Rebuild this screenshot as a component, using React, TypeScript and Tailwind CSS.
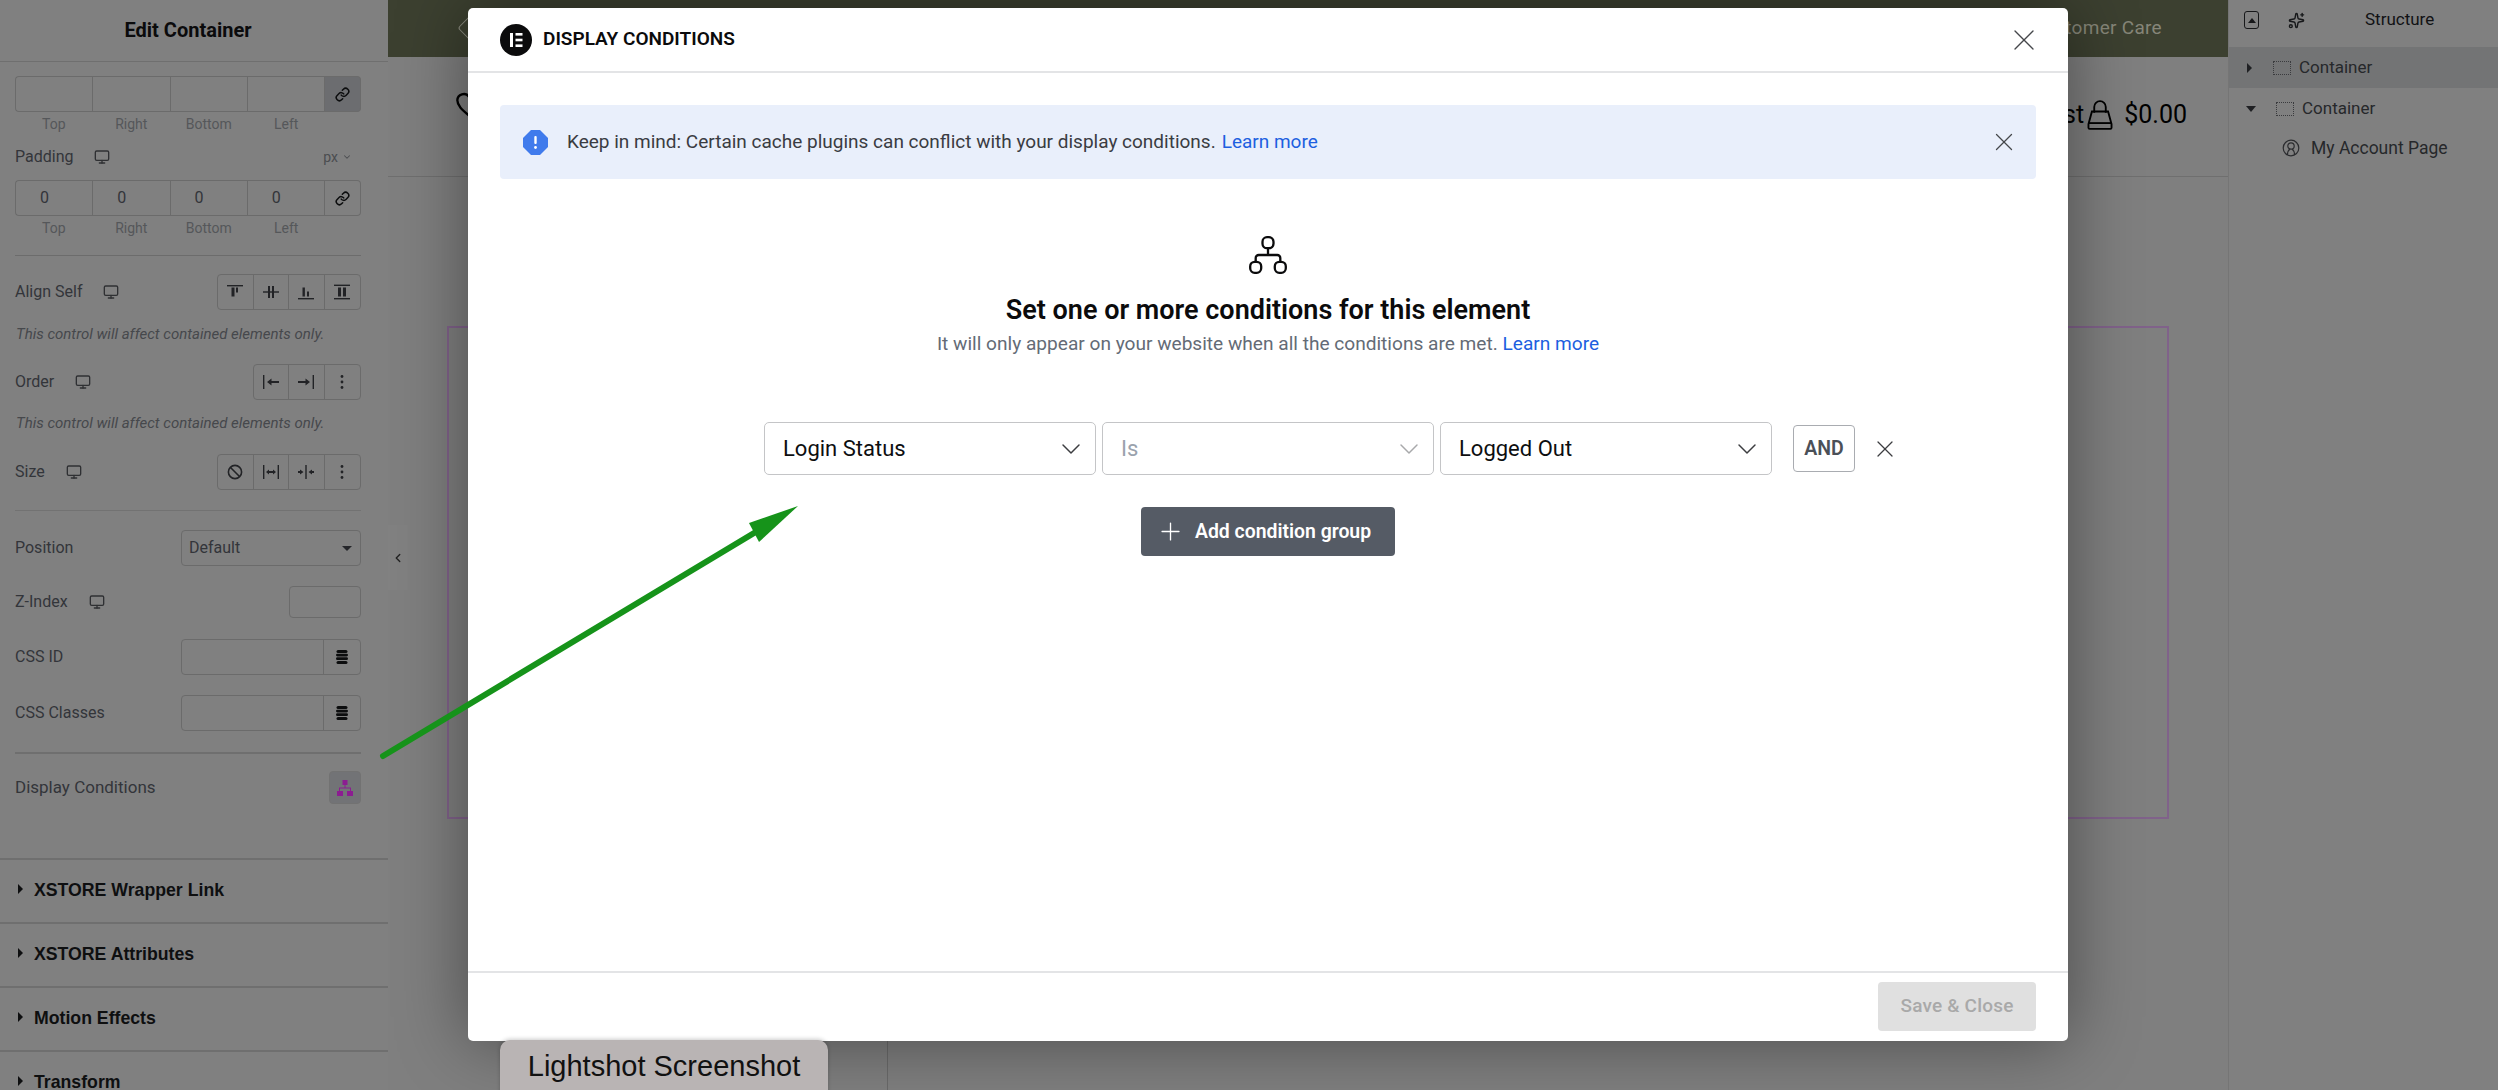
import { ChevronDown, ChevronLeft, Link, Monitor, Plus, Sparkles, X } from "lucide-react";
import type { ReactNode } from "react";

const Device = () => <Monitor size={16} strokeWidth={2} className="text-[#2f3033]" />;

const SideBox = ({ values }: { values: string[] }) => (
  <div className="flex h-9 rounded-l-[4px] border border-r-0 border-[#6b6b6b]">
    {values.map((v, i) => (
      <div key={i} className="flex flex-1 items-center border-r border-[#6b6b6b] pl-6 text-[16px] text-[#33353a]">
        {v}
      </div>
    ))}
  </div>
);

const SideLabels = () => (
  <div className="mt-1 flex h-4 items-center pr-[36px] text-[14px] text-[#55575a]">
    {["Top", "Right", "Bottom", "Left"].map((l) => (
      <div key={l} className="flex-1 text-center">{l}</div>
    ))}
  </div>
);

const BoxRow = ({ linked, values }: { linked?: boolean; values: string[] }) => (
  <div className="flex">
    <div className="flex-1">
      <SideBox values={values} />
    </div>
    <div className={`flex h-9 w-[36px] items-center justify-center rounded-r-[4px] border border-l-0 border-[#6b6b6b] ${linked ? "bg-[#6c6d70]" : ""}`}>
      <Link size={15} strokeWidth={2.4} className="text-[#0c0d0e]" />
    </div>
  </div>
);

const Seg = ({ cells }: { cells: ReactNode[] }) => (
  <div className="flex h-9 rounded-[4px] border border-[#6b6b6b]">
    {cells.map((c, i) => (
      <div key={i} className="flex w-[35.500px] items-center justify-center border-r border-[#6b6b6b] text-[#222326] last:border-r-0">
        {c}
      </div>
    ))}
  </div>
);

const Glyph = ({ children }: { children: ReactNode }) => (
  <svg width="18" height="18" viewBox="0 0 18 18" fill="currentColor">{children}</svg>
);

const alignCells = [
  <Glyph key="a"><rect x="1" y="2" width="16" height="1.4" /><rect x="5.5" y="4.5" width="3" height="9" /><rect x="10" y="4.5" width="2" height="5" /></Glyph>,
  <Glyph key="b"><rect x="1" y="8.3" width="16" height="1.4" /><rect x="6" y="3" width="2" height="12" /><rect x="10" y="3" width="2" height="12" /></Glyph>,
  <Glyph key="c"><rect x="1" y="15" width="16" height="1.4" /><rect x="5.5" y="4.5" width="2.4" height="9" /><rect x="10" y="8.5" width="2" height="5" /></Glyph>,
  <Glyph key="d"><rect x="1" y="1.6" width="16" height="1.4" /><rect x="1" y="15" width="16" height="1.4" /><rect x="5" y="4.5" width="3" height="9" /><rect x="10" y="4.5" width="3" height="9" /></Glyph>,
];

const Dots = () => (
  <Glyph><circle cx="9" cy="3.5" r="1.4" /><circle cx="9" cy="9" r="1.4" /><circle cx="9" cy="14.5" r="1.4" /></Glyph>
);

const orderCells = [
  <Glyph key="a"><rect x="1" y="2" width="1.4" height="14" /><path d="M5 9l4.5-3.5V8H17v2H9.5v2.500z" /></Glyph>,
  <Glyph key="b"><rect x="15.600" y="2" width="1.4" height="14" /><path d="M13 9L8.500 5.500V8H1v2h7.500v2.500z" /></Glyph>,
  <Dots key="c" />,
];

const sizeCells = [
  <svg key="a" width="18" height="18" viewBox="0 0 18 18" fill="none" stroke="currentColor" strokeWidth="1.6"><circle cx="9" cy="9" r="6.600" /><path d="M4.500 4.500l9 9" /></svg>,
  <Glyph key="b"><rect x="1" y="2" width="1.4" height="14" /><rect x="15.600" y="2" width="1.4" height="14" /><path d="M4 9l3-2.500V8h4V6.500L14 9l-3 2.500V10H7v1.500z" /></Glyph>,
  <Glyph key="c"><rect x="8.300" y="2" width="1.4" height="14" /><path d="M1 8h2V6.500L6.500 9 3 11.500V10H1zM17 8h-2V6.500L11.500 9l3.500 2.500V10h2z" /></Glyph>,
  <Dots key="d" />,
];

// the dynamic-tags stack, solid in the reference
const DbIcon = () => (
  <svg width="12" height="14" viewBox="0 0 12 14" fill="#0c0d0e">
    <rect x="0.500" y="0" width="11" height="3" rx="1.500" />
    <rect x="0" y="3.700" width="12" height="2.800" rx="1.400" />
    <rect x="0" y="7.300" width="12" height="2.800" rx="1.400" />
    <rect x="0.500" y="10.900" width="11" height="3" rx="1.500" />
  </svg>
);

const Field = () => (
  <div className="flex h-9 w-[180px] rounded-[4px] border border-[#6b6b6b]">
    <div className="flex-1 border-r border-[#6b6b6b]" />
    <div className="flex w-9 items-center justify-center">
      <DbIcon />
    </div>
  </div>
);

const Labeled = ({ label, device, big, children }: { label: string; device?: boolean; big?: boolean; children: ReactNode }) => (
  <div className="flex items-center justify-between">
    <div className={`flex items-center gap-[21px] text-[#33353a] ${big ? "text-[17px]" : "text-[16px]"}`}>
      <span>{label}</span>
      {device && <Device />}
    </div>
    {children}
  </div>
);

const Note = () => (
  <div className="flex h-4 items-center whitespace-nowrap pl-px text-[15px] italic text-[#46484c]">
    This control will affect contained elements only.
  </div>
);

const Section = ({ title }: { title: string }) => (
  <div className="flex h-[64px] items-start gap-[11px] border-t-2 border-[#6f6f6f] pl-[18px] pt-[21px] font-['Liberation_Sans',sans-serif] text-[17.700px] font-bold text-[#0e0f10]">
    <span className="mt-[3px] h-0 w-0 border-y-[5px] border-l-[5px] border-y-transparent border-l-[#0e0f10]" />
    <span className="leading-[18px]">{title}</span>
  </div>
);

const LeftPanel = () => (
  <aside className="h-full w-[388px] shrink-0 overflow-hidden bg-[#808080]">
    <div className="flex h-[62px] items-center justify-center border-b border-[#6f6f6f] pb-[2px] pr-3 text-[20px] font-bold text-[#0b0b0c]">
      Edit Container
    </div>
    <div className="pl-[15px] pr-[27px]">
      <div className="mt-[14px]"><BoxRow linked values={["", "", "", ""]} /></div>
      <SideLabels />
      <div className="mt-[13px] flex h-6 items-center justify-between pr-[9px]">
        <div className="flex items-center gap-[21px] text-[16px] text-[#33353a]">
          <span>Padding</span>
          <Device />
        </div>
        <div className="flex items-center gap-1 text-[14px] text-[#4b4d50]">
          px <ChevronDown size={10} strokeWidth={2.5} />
        </div>
      </div>
      <div className="mt-[11px]"><BoxRow values={["0", "0", "0", "0"]} /></div>
      <SideLabels />
      <div className="mt-[19px] h-px bg-[#6c6c6c]" />
      <div className="mt-[18px]"><Labeled label="Align Self" device><Seg cells={alignCells} /></Labeled></div>
      <div className="mt-4"><Note /></div>
      <div className="mt-[22px]"><Labeled label="Order" device><Seg cells={orderCells} /></Labeled></div>
      <div className="mt-[15px]"><Note /></div>
      <div className="mt-[23px]"><Labeled label="Size" device><Seg cells={sizeCells} /></Labeled></div>
      <div className="mt-5 h-px bg-[#727272]" />
      <div className="mt-[19px]">
        <Labeled label="Position">
          <div className="flex h-9 w-[180px] items-center justify-between rounded-[4px] border border-[#6b6b6b] pl-[7px] pr-[8px] text-[16px] text-[#33353a]">
            Default
            <span className="h-0 w-0 border-x-[5px] border-t-[5px] border-x-transparent border-t-[#25262a]" />
          </div>
        </Labeled>
      </div>
      <div className="mt-5">
        <Labeled label="Z-Index" device>
          <div className="h-8 w-[72px] rounded-[4px] border border-[#6b6b6b]" />
        </Labeled>
      </div>
      <div className="mt-[21px]"><Labeled label="CSS ID"><Field /></Labeled></div>
      <div className="mt-5"><Labeled label="CSS Classes"><Field /></Labeled></div>
      <div className="mt-[21px] h-[2px] bg-[#6f6f6f]" />
      <div className="mt-[17px]">
        <Labeled label="Display Conditions" big>
          <div className="flex h-[33px] w-[32px] items-center justify-center rounded-[4px] border border-[#727272] bg-[#727376]">
            <svg width="18" height="18" viewBox="0 0 18 18" fill="#8c1d91">
              <rect x="6.500" y="1" width="5" height="5" />
              <rect x="1" y="12" width="6" height="5" />
              <rect x="11" y="12" width="6" height="5" />
              <path d="M8.500 6h1v2.500H15V12h-1V9.500H4V12H3V8.500h5.500z" />
            </svg>
          </div>
        </Labeled>
      </div>
    </div>
    <div className="mt-[54px]">
      <Section title="XSTORE Wrapper Link" />
      <Section title="XSTORE Attributes" />
      <Section title="Motion Effects" />
      <Section title="Transform" />
    </div>
  </aside>
);

const PageBackdrop = () => (
  <main className="relative h-full min-w-0 flex-1 overflow-hidden bg-[#7f7f7f]">
    <div className="flex h-[57px] items-center justify-between bg-[#3c4030] pb-[1px] pl-[74px] pr-[66px] text-[19px] text-[#868679]">
      <span className="h-[22px] w-[22px] rotate-45 rounded-[3px] border border-[#8c8c80]" />
      <span className="tracking-[0.3px]">Customer Care</span>
    </div>
    <div className="flex h-[120px] items-center justify-between border-b border-[#6f6f6f] pb-[3px] pl-[67px] pr-[41px] text-black">
      <svg className="-mt-[20px]" width="28" height="28" viewBox="0 0 24 24" fill="none" stroke="currentColor" strokeWidth="2"><path d="M12 21C6 16 2 12.500 2 8a5.500 5.500 0 0 1 10-3 5.500 5.500 0 0 1 10 3c0 4.500-4 8-10 13z" /></svg>
      <div className="flex items-center text-[25px]">
        <span className="mr-[2px]">Wishlist</span>
        <svg width="28" height="30" viewBox="0 0 24 26" fill="none" stroke="currentColor" strokeWidth="1.600">
          <path d="M7 11V6a5 5 0 0 1 10 0v5" />
          <path d="M5 10h14l3 11v3a1 1 0 0 1-1 1H3a1 1 0 0 1-1-1v-3z" />
          <path d="M2 20h20" />
        </svg>
        <span className="ml-[10px]">$0.00</span>
      </div>
    </div>
    <div className="mx-[59px] mt-[149px] h-[493px] border-2 border-[#80628a]" />
    <div className="ml-[499px] mt-[221px] h-[60px] border-l border-[#6a6a6a]" />
    <div className="absolute left-0 top-[525px] flex h-[65px] w-5 items-center justify-center bg-[#818181] text-[#222]">
      <ChevronLeft size={14} strokeWidth={2.4} />
    </div>
  </main>
);

const StructurePanel = () => (
  <aside className="h-full w-[270px] shrink-0 border-l border-[#757575] bg-[#808080] text-[17px] text-[#26282b]">
    <div className="flex h-[47px] items-center pb-[7px] pl-[15px]">
      <span className="flex h-[18px] w-[15px] items-center justify-center rounded-[3px] border-[1.500px] border-[#17181a]">
        <span className="h-0 w-0 border-x-[4px] border-b-[5px] border-x-transparent border-b-[#17181a]" />
      </span>
      <Sparkles size={17} className="ml-[29px] text-[#17181a]" />
      <span className="ml-[60px] text-[#111214]">Structure</span>
    </div>
    <div className="flex h-[41px] items-center bg-[#737475] pl-[18px]">
      <span className="h-0 w-0 border-y-[5px] border-l-[5px] border-y-transparent border-l-[#1f2023]" />
      <span className="ml-[21px] h-[14px] w-[18px] border border-dotted border-[#3a3b3e]" />
      <span className="ml-[8px]">Container</span>
    </div>
    <div className="flex h-[41px] items-center pl-[17px]">
      <span className="h-0 w-0 border-x-[5px] border-t-[6px] border-x-transparent border-t-[#1f2023]" />
      <span className="ml-[20px] h-[14px] w-[18px] border border-dotted border-[#3a3b3e]" />
      <span className="ml-[8px]">Container</span>
    </div>
    <div className="flex h-[38px] items-center pl-[53px]">
      <svg width="18" height="18" viewBox="0 0 18 18" fill="none" stroke="#2b2c2f" strokeWidth="1.200">
        <circle cx="9" cy="9" r="7.800" />
        <circle cx="9" cy="7" r="3.200" />
        <path d="M5.500 16c0-3 1-5 2.500-6M12.500 16c0-3-1-5-2.500-6" />
      </svg>
      <span className="ml-[11px] text-[17.500px] text-[#26282b]">My Account Page</span>
    </div>
  </aside>
);

const ConditionSelect = ({ value, muted, width }: { value: string; muted?: boolean; width: string }) => (
  <div className={`flex h-[53px] items-center justify-between rounded-[5px] border border-[#c4c5c7] pl-[18px] pr-[8px] text-[22px] ${width} ${muted ? "text-[#9aa2ad]" : "text-[#0d0e10]"}`}>
    {value}
    <ChevronDown size={32} strokeWidth={1.100} className={muted ? "text-[#a8a9ab]" : "text-[#3c3d40]"} />
  </div>
);

const Modal = () => (
  <div className="absolute left-[468px] top-2 flex h-[1033px] w-[1600px] flex-col rounded-[5px] bg-white shadow-[0_0_70px_rgba(0,0,0,0.42)]">
    <div className="flex h-[65px] shrink-0 items-center border-b-2 border-[#e3e4e6] pl-8 pr-[26px]">
      <svg width="32" height="32" viewBox="0 0 32 32">
        <circle cx="16" cy="16" r="16" fill="#0b0b0c" />
        <rect x="10" y="9" width="3" height="14" fill="#fff" />
        <rect x="15.500" y="9" width="7" height="2.600" fill="#fff" />
        <rect x="15.500" y="14.700" width="7" height="2.600" fill="#fff" />
        <rect x="15.500" y="20.400" width="7" height="2.600" fill="#fff" />
      </svg>
      <span className="ml-[11px] text-[19px] font-semibold uppercase text-[#0b0b0c]">Display Conditions</span>
      <X size={36} strokeWidth={0.900} className="ml-auto text-[#45474b]" />
    </div>
    <div className="mx-8 mt-8 flex h-[74px] shrink-0 items-center rounded-[4px] bg-[#e9effb] pl-[23px] pr-[17px]">
      <svg width="25" height="25" viewBox="0 0 25 25">
        <path d="M8 0h9l8 8v9l-8 8H8l-8-8V8z" fill="#407bec" />
        <rect x="11.300" y="6" width="2.400" height="8" rx="1" fill="#fff" />
        <circle cx="12.500" cy="17.500" r="1.400" fill="#fff" />
      </svg>
      <span className="ml-[19px] text-[19px] text-[#3a3c42]">
        Keep in mind: Certain cache plugins can conflict with your display conditions.
      </span>
      <span className="ml-[6px] text-[19px] text-[#1d5fe0]">Learn more</span>
      <X size={30} strokeWidth={1} className="ml-auto text-[#45474b]" />
    </div>
    <div className="mt-[57px] flex flex-col items-center">
      <svg width="38" height="38" viewBox="0 0 38 38" fill="none" stroke="#0b0b0c" strokeWidth="2.300">
        <rect x="13.500" y="1.200" width="11" height="11" rx="4.500" />
        <rect x="1.200" y="25.800" width="11" height="11" rx="4.500" />
        <rect x="25.800" y="25.800" width="11" height="11" rx="4.500" />
        <path d="M19 12.500V19M6.700 25.500V22a3 3 0 0 1 3-3h18.600a3 3 0 0 1 3 3v3.500" />
      </svg>
      <h2 className="mt-[20px] text-[27px] font-semibold leading-[32px] text-[#0b0b0c]">Set one or more conditions for this element</h2>
      <p className="mt-[6px] text-[19.100px] leading-[24px] text-[#646b76]">
        It will only appear on your website when all the conditions are met. <span className="text-[#1d5fe0]">Learn more</span>
      </p>
    </div>
    <div className="mt-[66px] flex items-center pl-[296px]">
      <ConditionSelect value="Login Status" width="w-[332px]" />
      <div className="ml-[6px]"><ConditionSelect value="Is" muted width="w-[332px]" /></div>
      <div className="ml-[6px]"><ConditionSelect value="Logged Out" width="w-[332px]" /></div>
      <div className="ml-[21px] flex h-[47px] w-[62px] items-center justify-center rounded-[4px] border border-[#a9acb1] text-[19.500px] font-semibold text-[#4b5058]">AND</div>
      <X size={28} strokeWidth={1.100} className="ml-4 text-[#3c3d40]" />
    </div>
    <div className="mt-[32px] flex justify-center">
      <div className="flex h-[49px] w-[254px] items-center gap-[10px] rounded-[4px] bg-[#555b65] pl-[15px] text-[19.400px] font-semibold text-white">
        <Plus size={29} strokeWidth={1.100} />
        Add condition group
      </div>
    </div>
    <div className="mt-auto flex h-[70px] shrink-0 justify-end border-t-2 border-[#e3e4e6] pr-8 pt-[9px]">
      <div className="flex h-[49px] w-[158px] items-center justify-center rounded-[4px] bg-[#e0e0e0] text-[19px] font-medium tracking-[0.2px] text-[#a9a9a9]">
        Save &amp; Close
      </div>
    </div>
  </div>
);

export default function App() {
  return (
    <div className="relative flex h-[1090px] w-[2498px] overflow-hidden font-['Roboto',sans-serif]">
      <LeftPanel />
      <PageBackdrop />
      <StructurePanel />
      <Modal />
      {/* green annotation arrow from the screenshot tool */}
      <svg className="absolute left-0 top-0" width="2498" height="1090" fill="none">
        <path d="M383 756L764 527" stroke="#16931a" strokeWidth="6" strokeLinecap="round" />
        <path d="M798 506L749 523L759 542z" fill="#16931a" />
      </svg>
      <div className="absolute left-[500px] top-[1040px] flex h-[60px] w-[328px] items-start justify-center rounded-[10px] bg-[#b9b4b4] pt-[5px] font-['Liberation_Sans',sans-serif] text-[29px] text-[#111] shadow-[0_-1px_4px_rgba(0,0,0,0.2)]">
        Lightshot Screenshot
      </div>
    </div>
  );
}
